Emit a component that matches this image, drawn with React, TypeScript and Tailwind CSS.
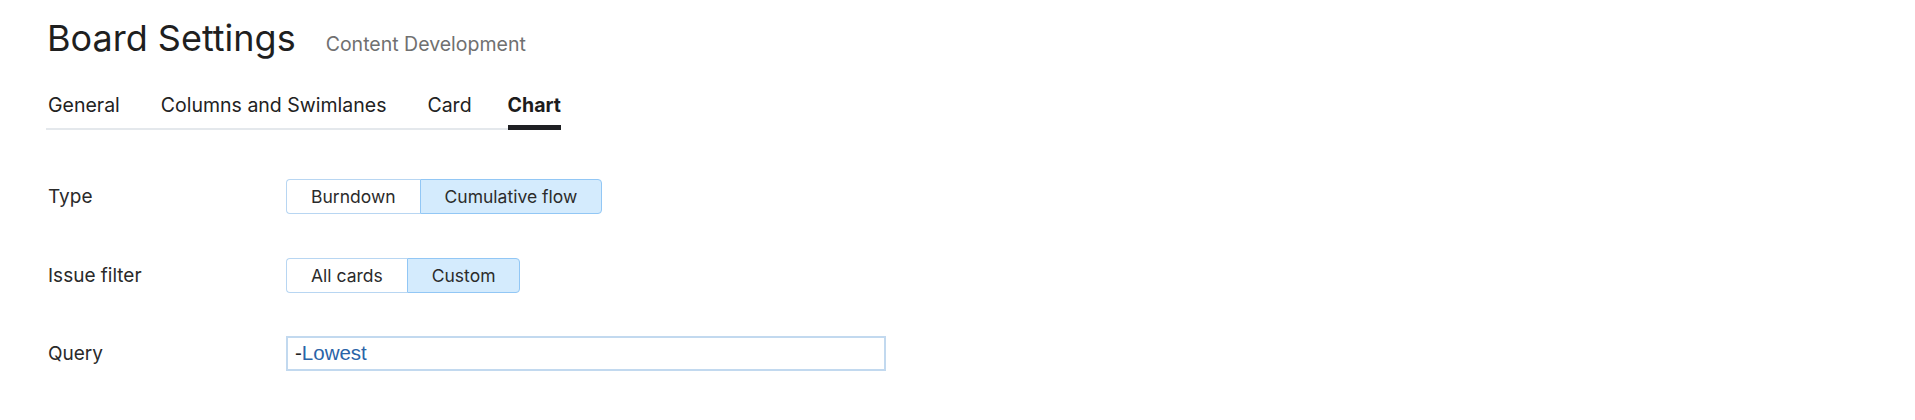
import React from "react";

const inter = { fontFamily: "Inter, 'Noto Sans', sans-serif" };

function Seg({ items, active }: { items: string[]; active: number }) {
  return (
    <div className="flex h-[35px]">
      {items.map((it, i) => {
        const sel = i === active;
        const first = i === 0;
        const last = i === items.length - 1;
        return (
          <div
            key={it}
            className={
              "flex items-center px-[24px] text-[17.5px] leading-[21px] text-[#2b2b2b] border " +
              (sel ? "bg-[#d4ebfd] border-[#92c7f5] " : "bg-white border-[#b8d6f2] ") +
              (first ? "rounded-l-[4px] " : "") +
              (last ? "rounded-r-[4px] " : "") +
              (!first && !sel ? "border-l-0 " : "") +
              (first && !sel && items.length > 1 ? "border-r-0 " : "")
            }
          >
            {it}
          </div>
        );
      })}
    </div>
  );
}

export default function App() {
  const tabs = ["General", "Columns and Swimlanes", "Card", "Chart"];
  return (
    <div className="w-[1915px] h-[420px] bg-white px-[46px] pt-[16px]" style={inter}>
      <div className="flex items-baseline h-[44px]">
        <h1 className="text-[36px] leading-[44px] font-normal text-[#1f1f1f] ml-[1px]">Board Settings</h1>
        <span className="ml-[30px] text-[19.5px] text-[#707070]">Content Development</span>
      </div>
      <div className="mt-[34px] inline-flex gap-[41px] border-b-2 border-[#e4e8ec]">
        {tabs.map((t) => {
          const act = t === "Chart";
          return (
            <div
              key={t}
              className={
                "relative pb-[11px] text-[19.5px] leading-[23px] " +
                (act ? "font-bold text-[#1c1c1c] -ml-[5px]" : "text-[#222] first:ml-[2px]")
              }
            >
              {t}
              {act && <span className="absolute left-0 right-0 bottom-[-2px] h-[5px] bg-[#1f2023]" />}
            </div>
          );
        })}
      </div>
      <div className="mt-[49px] flex flex-col gap-[43.5px]">
        <div className="flex items-center h-[35px]">
          <div className="w-[240px] pl-[2px] text-[19px] leading-[23px] text-[#2a2a2a]">Type</div>
          <Seg items={["Burndown", "Cumulative flow"]} active={1} />
        </div>
        <div className="flex items-center h-[35px]">
          <div className="w-[240px] pl-[2px] text-[19px] leading-[23px] text-[#2a2a2a]">Issue filter</div>
          <Seg items={["All cards", "Custom"]} active={1} />
        </div>
        <div className="flex items-center h-[35px]">
          <div className="w-[240px] pl-[2px] text-[19px] leading-[23px] text-[#2a2a2a]">Query</div>
          <div
            className="w-[600px] h-[35px] border-2 border-[#c2d9ef] flex items-center pl-[7px] text-[20.5px]"
            style={{ fontFamily: "'Liberation Sans', Arial, sans-serif" }}
          >
            <span className="text-[#222]">-</span>
            <span className="text-[#2a64a8]">Lowest</span>
          </div>
        </div>
      </div>
    </div>
  );
}
